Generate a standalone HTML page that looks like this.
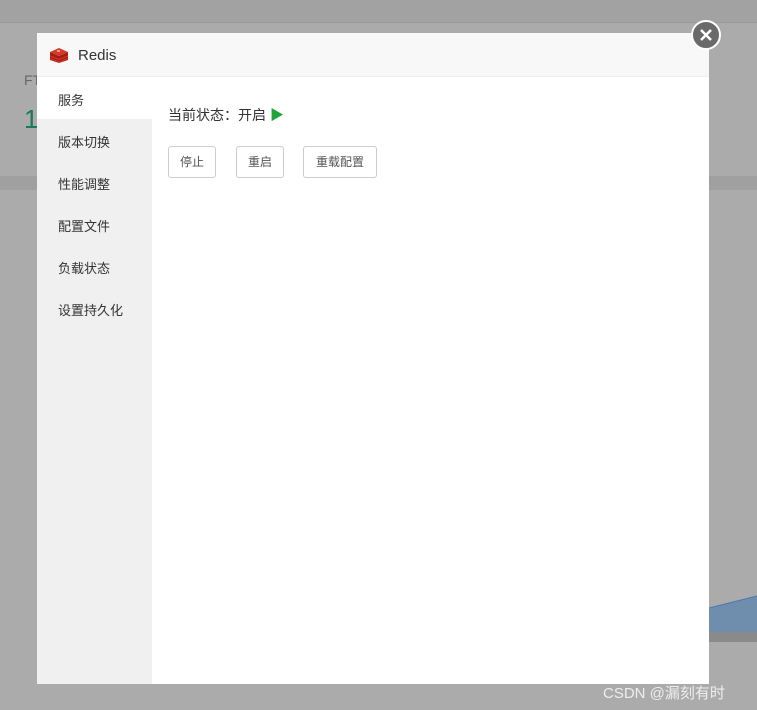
<!DOCTYPE html><html><head><meta charset="utf-8"><style>
body{margin:0;width:757px;height:710px;overflow:hidden;background:#ababab;font-family:"Liberation Sans","Noto Sans CJK SC",sans-serif;position:relative}
.a{position:absolute}
.dlg{left:37px;top:33px;width:672px;height:651px;background:#fff}
.hd{left:0;top:0;width:672px;height:43px;background:#f8f8f8;border-bottom:1px solid #eee}
.side{left:0;top:44px;width:115px;height:607px;background:#f0f0f0}
.it{position:absolute;left:21px;font-size:13px;color:#333}
.btn{position:absolute;top:113px;height:30px;border:1px solid #ccc;border-radius:3px;background:#fff;font-size:12px;color:#555;line-height:30px;text-align:center}
</style></head><body>
<div class="a" style="left:0;top:0;width:757px;height:22px;background:#a2a2a2"></div>
<div class="a" style="left:0;top:22px;width:757px;height:1px;background:#999"></div>
<div class="a" style="left:0;top:176px;width:757px;height:14px;background:#a0a0a0"></div>
<div class="a" style="left:24px;top:72px;font-size:14px;color:#666">FT</div>
<div class="a" style="left:24px;top:104px;font-size:26px;color:#1a7a5a">1</div>
<svg class="a" style="left:709px;top:580px" width="48" height="65"><path d="M0 28L48 16V55H0z" fill="#6f8eae"/><path d="M0 28L48 16" stroke="#4a78b0"/><path d="M0 52h48v10H0z" fill="#8a8a8a"/></svg>
<div class="a" style="left:603px;top:682px;font-size:15px;color:#eee">CSDN @漏刻有时</div>
<div class="a dlg">
<div class="a hd"><svg class="a" style="left:12px;top:14px" width="20" height="16" viewBox="0 0 20 16"><path d="M1 5l9-4 9 4-9 4z" fill="#d33a2c"/><path d="M1 5v8l9 3 9-3V5l-9 4z" fill="#a41e11"/><path d="M1 9l9 3.5 9-3.5M1 11.5l9 3.5 9-3.5" stroke="#d33a2c" fill="none"/><path d="M8 4h3" stroke="#fff"/></svg><span class="a" style="left:41px;top:14px;font-size:15px;color:#333">Redis</span></div>
<div class="a side">
<div class="a" style="left:0;top:0;width:115px;height:42px;background:#fff"></div>
<span class="it" style="top:13px">服务</span><span class="it" style="top:55px">版本切换</span><span class="it" style="top:97px">性能调整</span><span class="it" style="top:139px">配置文件</span><span class="it" style="top:181px">负载状态</span><span class="it" style="top:223px">设置持久化</span>
</div>
<div class="a" style="left:131px;top:72px;font-size:14px;color:#333">当前状态：开启 <span style="color:#20a53a">▶</span></div>
<div class="btn" style="left:131px;width:46px">停止</div>
<div class="btn" style="left:199px;width:46px">重启</div>
<div class="btn" style="left:266px;width:72px">重载配置</div>
</div>
<div class="a" style="left:691px;top:20px;width:26px;height:26px;border-radius:50%;background:#6a6a6a;border:2px solid #fff"><svg width="26" height="26"><path d="M8 8l10 10M18 8L8 18" stroke="#fff" stroke-width="2.5"/></svg></div>
</body></html>
